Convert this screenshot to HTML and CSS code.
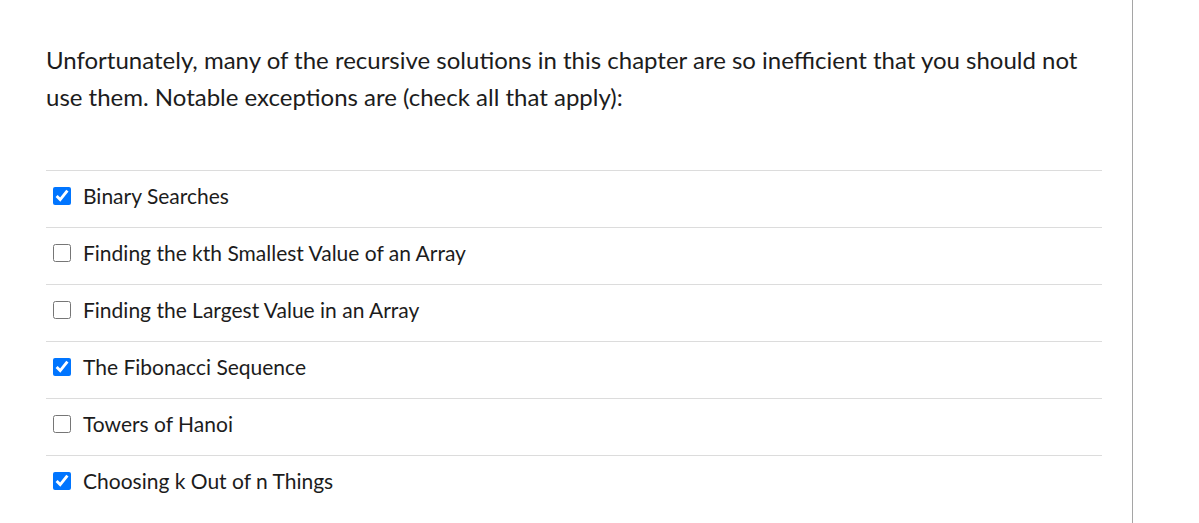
FILE: index.html
```html
<!DOCTYPE html>
<html>
<head>
<meta charset="utf-8">
<link rel="stylesheet" href="styles.css">
</head>
<body>
<div class="panel">
  <p class="question">Unfortunately, many of the recursive solutions in this chapter are so inefficient that you should not use them. Notable exceptions are (check all that apply):</p>
  <div class="answers">
    <label class="answer"><input type="checkbox" checked><span>Binary Searches</span></label>
    <label class="answer"><input type="checkbox"><span>Finding the kth Smallest Value of an Array</span></label>
    <label class="answer"><input type="checkbox"><span>Finding the Largest Value in an Array</span></label>
    <label class="answer"><input type="checkbox" checked><span>The Fibonacci Sequence</span></label>
    <label class="answer"><input type="checkbox"><span>Towers of Hanoi</span></label>
    <label class="answer"><input type="checkbox" checked><span>Choosing k Out of n Things</span></label>
  </div>
</div>
</body>
</html>
```

FILE: styles.css
```css
html, body {
  margin: 0;
  padding: 0;
  background: #fff;
}
body {
  font-family: Lato, "Liberation Sans", sans-serif;
  color: #1c1c1c;
}
.panel {
  width: 1133px;
  height: 523px;
  overflow: hidden;
  padding: 41px 30px 0 46px;
  border-right: 1px solid #a5a5a5;
  box-sizing: border-box;
}
.question {
  margin: 0 0 55px 0;
  font-size: 24px;
  line-height: 37px;
}
.answers {
  display: flex;
  flex-direction: column;
}
.answer {
  display: flex;
  align-items: center;
  height: 57px;
  box-sizing: border-box;
  border-top: 1px solid #dcdcdc;
  font-size: 21px;
  padding-left: 7px;
  padding-bottom: 8px;
}
.answer input {
  width: 18px;
  height: 18px;
  margin: 1px 12px 0 0;
}
```
